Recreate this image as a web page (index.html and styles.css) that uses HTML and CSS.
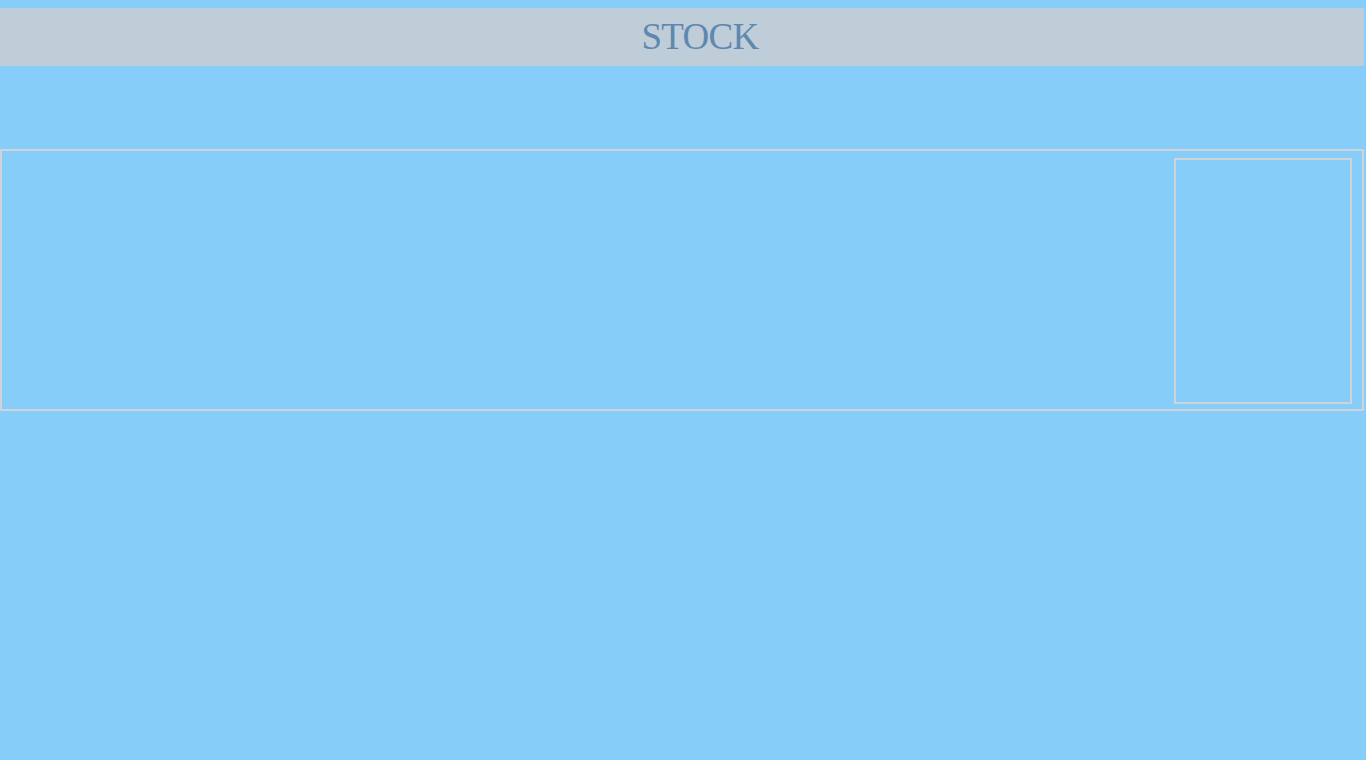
FILE: index.html
```html
<!DOCTYPE html>
<html>
<head>
<meta charset="utf-8">
<link rel="stylesheet" href="styles.css">
<title>Stock</title>
</head>
<body>
<header class="topbar"><h1 class="title">STOCK</h1></header>
<main class="panel">
  <div class="panel-side"></div>
</main>
</body>
</html>
```
FILE: styles.css
```css
html, body {
  margin: 0;
  padding: 0;
  background: #87cdf9;
}
body {
  padding-top: 8px;
  width: 1364px;
  font-family: "Liberation Serif", "Times New Roman", serif;
}
.topbar {
  height: 58px;
  background: #bfcdd9;
  display: flex;
  align-items: center;
  justify-content: center;
  padding-left: 36px;
  box-sizing: border-box;
}
.title {
  margin: 0;
  font-weight: normal;
  font-size: 37px;
  letter-spacing: -0.7px;
  line-height: 1;
  color: #5e88b0;
  position: relative;
  top: -1px;
}
.panel {
  margin-top: 83px;
  height: 262px;
  box-sizing: border-box;
  border: 2px solid #d0d4d8;
  display: flex;
  justify-content: flex-end;
  padding: 7px 10px 5px 0;
}
.panel-side {
  width: 178px;
  height: 246px;
  box-sizing: border-box;
  border: 2px solid #d0d4d8;
}
```
